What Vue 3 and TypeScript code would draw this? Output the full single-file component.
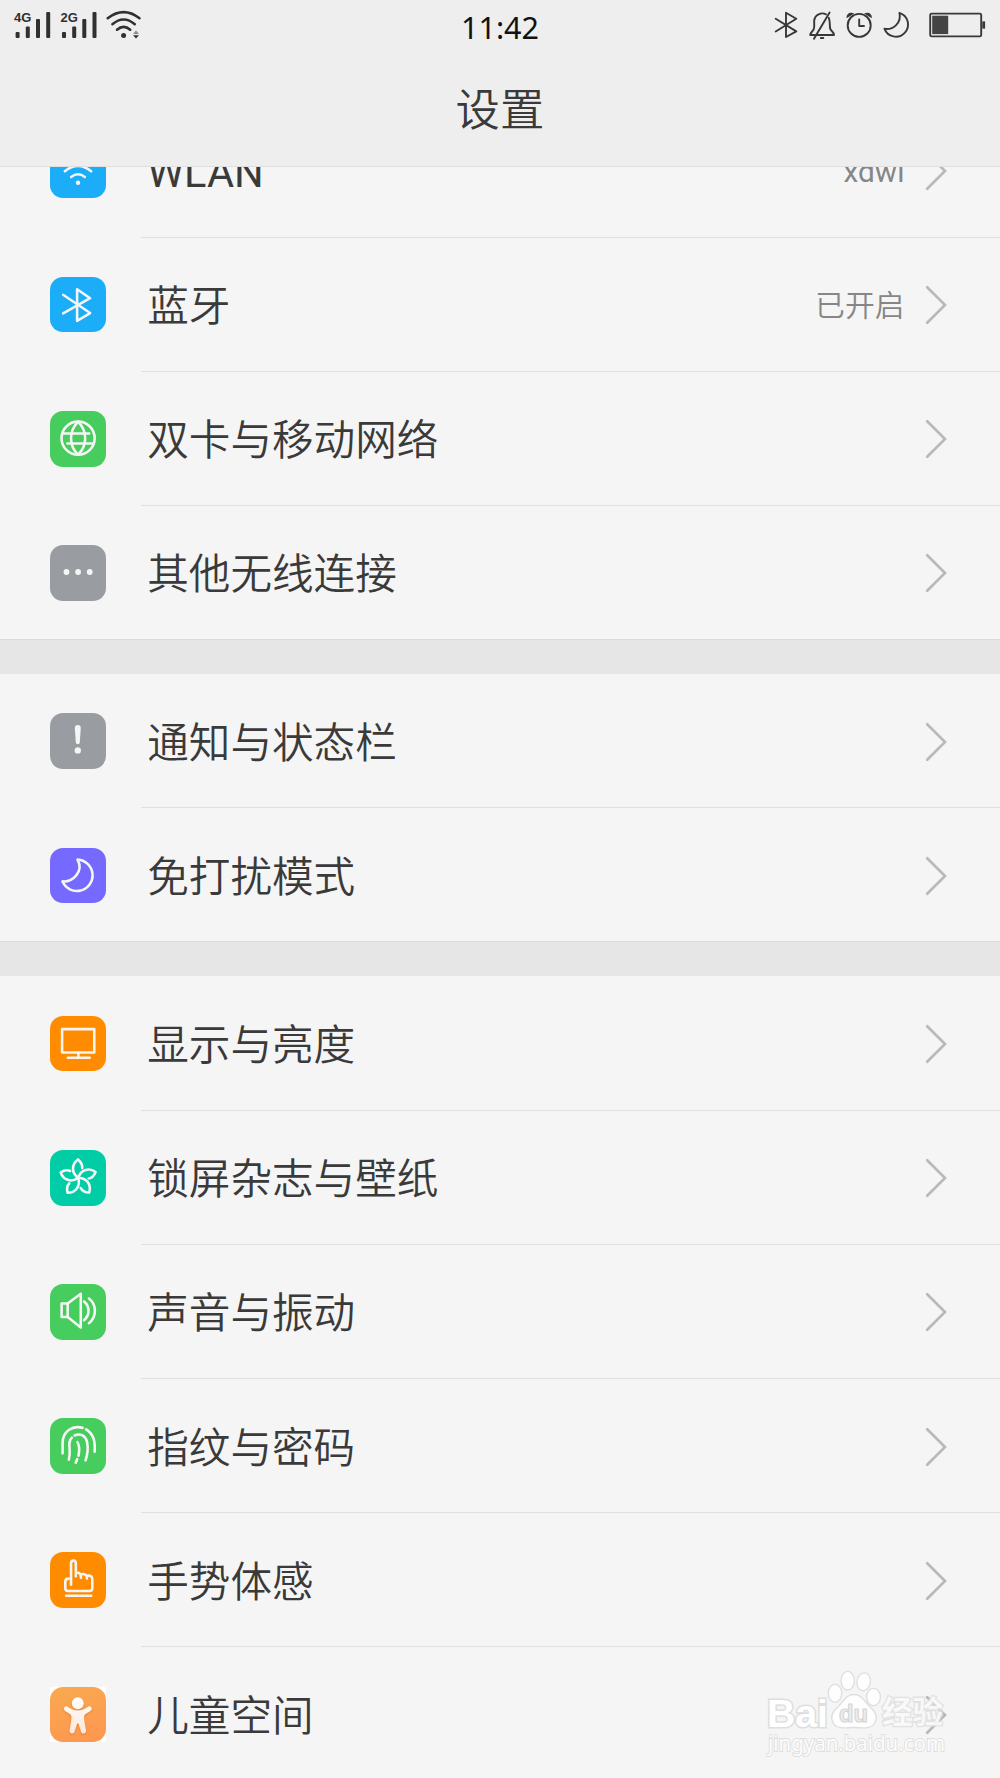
<script setup lang="ts">
type IconName =
  | 'wifi' | 'bluetooth' | 'globe' | 'dots' | 'alert' | 'moon' | 'display'
  | 'flower' | 'sound' | 'finger' | 'hand' | 'child'

interface Item {
  icon: IconName
  label: string
  color: string
  value?: string
  latin?: boolean
}

const sections: Item[][] = [
  [
    { icon: 'wifi', label: 'WLAN', color: 'blue', value: 'xdwl', latin: true },
    { icon: 'bluetooth', label: '蓝牙', color: 'blue', value: '已开启' },
    { icon: 'globe', label: '双卡与移动网络', color: 'green' },
    { icon: 'dots', label: '其他无线连接', color: 'gray' },
  ],
  [
    { icon: 'alert', label: '通知与状态栏', color: 'gray' },
    { icon: 'moon', label: '免打扰模式', color: 'purple' },
  ],
  [
    { icon: 'display', label: '显示与亮度', color: 'orange' },
    { icon: 'flower', label: '锁屏杂志与壁纸', color: 'teal' },
    { icon: 'sound', label: '声音与振动', color: 'green' },
    { icon: 'finger', label: '指纹与密码', color: 'green' },
    { icon: 'hand', label: '手势体感', color: 'orange' },
    { icon: 'child', label: '儿童空间', color: 'peach' },
  ],
]

const strokes: Partial<Record<IconName, string[]>> = {
  wifi: ['M15 28.4Q28.2 17.6 41.4 28.4', 'M21.3 34.3Q28.2 28.6 35.1 34.3'],
  bluetooth: ['M13.2 17.9L40.4 36.3L27.3 44.2V12.4L40.4 21.4L13.2 36.6'],
  globe: [
    'M28.3 10.7a16.7 16.7 0 1 0 0 33.4a16.7 16.7 0 1 0 0-33.4',
    'M28.3 10.9C18.8 20 18.8 35 28.3 44C37.8 35 37.8 20 28.3 10.9',
    'M13.3 22.7H39.5',
    'M17.5 32.8H43.5',
  ],
  moon: ['M27.7 11.7A15.8 15.8 0 1 1 12.5 33.6C22.6 34.6 34.5 23.8 27.7 11.7Z'],
  display: ['M12.2 13.2H44.6V36.8H12.2Z', 'M28.6 37V42', 'M18 42H40'],
  sound: [
    'M11.7 19.7H17.8V33.2H11.7Z',
    'M17.8 19.7L31 9.8V43.8L17.8 33.2',
    'M34.3 17.6Q38.8 21.2 38.8 27Q38.8 32.8 34.3 36.4',
    'M39.2 14.6Q45.2 19 45.2 27Q45.2 35 39.2 39.5',
  ],
  finger: [
    'M12.7 35.6V25.2C12.7 13.5 22.5 7 32.8 9.9',
    'M36.4 11.5C44.2 16.5 45.6 23.5 45 34',
    'M22 19.8C16.5 25.5 22 31 19 42',
    'M24.8 17.6C30.5 14.8 36 18 37.4 24.3C38.5 30.5 38 36.5 35.8 42.7',
    'M27.6 24.3C30 28 29.7 33 28.7 38',
    'M27.4 41.4L25.9 45',
  ],
  hand: [
    'M21.2 33V11.5C21.2 7.8 26 7.8 26 11.5V24.5M26 21.2C29.8 20.2 31.2 22 31.2 26M31.2 22.6C35 21.3 37.2 23 37.2 26.7M37.2 24C41 23.2 42.6 24.7 42.6 27.5V36.5Q42.6 39.2 40 39.2H18Q15.4 39.2 15.4 36.5V30Q15.4 26.8 18.8 26.8',
    'M16.2 44H41.5',
  ],
}

const petals = [0, 72, 144, 216, 288]
</script>

<template>
  <div class="screen">
    <header class="header">
      <div class="status">
        <svg class="status-left" viewBox="0 0 160 50">
          <g fill="#303030">
            <text x="14" y="22" class="net">4G</text>
            <rect x="15.6" y="32" width="4" height="6" rx="1" />
            <rect x="25.8" y="26.5" width="4" height="11.5" rx="1" />
            <rect x="36" y="19" width="4" height="19" rx="1" />
            <rect x="46.2" y="12" width="4" height="26" rx="1" />
            <text x="60.5" y="22" class="net">2G</text>
            <rect x="62" y="32" width="4" height="6" rx="1" />
            <rect x="72.2" y="26.5" width="4" height="11.5" rx="1" />
            <rect x="82.3" y="19" width="4" height="19" rx="1" />
            <rect x="92.5" y="12" width="4" height="26" rx="1" />
            <circle cx="123.6" cy="35.5" r="2.5" />
            <path d="M133 34L136 30.5L139 34Z" fill="#8a8a8a" />
            <path d="M133 35.3L136 38.6L139 35.3Z" />
          </g>
          <g fill="none" stroke="#303030" stroke-width="2.5" stroke-linecap="round">
            <path d="M107.7 18.3Q123.6 6 139.5 18.3" />
            <path d="M112.4 24.3Q123.6 14.6 134.8 24.3" />
            <path d="M117 29.8Q123.6 24 130.2 29.8" />
          </g>
        </svg>
        <span class="time">11:42</span>
        <svg class="status-right" viewBox="0 0 240 50">
          <g fill="none" stroke="#383838" stroke-width="1.9" stroke-linejoin="round" stroke-linecap="round">
            <path d="M15.7 18.7L36.3 31.4L26 37V12.8L36.3 18.7L15.7 31.5" />
            <path d="M66 14.3C61.5 12 54.6 14.5 54.2 21V27C54.2 31.5 50.2 31.8 50.2 35H54.6M68.8 17.8C70.2 21 69.6 24 70 28C70.4 31 74 31.8 74 35H57.6M69.6 12.5L54 38.8M60.8 38H63.3" />
            <circle cx="99.2" cy="25.4" r="11.5" />
            <path d="M99.2 19.5V26H104" />
            <path d="M139.4 12.8A12.2 12.2 0 1 1 124.4 28.7C132.5 30.3 142 23.5 139.4 12.8Z" />
            <rect x="170.2" y="13.6" width="51" height="22.8" rx="1.5" />
          </g>
          <path d="M86.6 18.3C86.2 13.5 90 11.8 94.3 13.4ZM111.8 18.3C112.2 13.5 108.4 11.8 104.1 13.4Z" fill="#383838" />
          <rect x="172.2" y="15.7" width="16" height="18.4" fill="#444" />
          <rect x="222.3" y="21.4" width="2.8" height="7.2" fill="#383838" />
        </svg>
      </div>
      <h1 class="title">设置</h1>
    </header>

    <main class="list">
      <section v-for="(items, s) in sections" :key="s" class="section">
        <div v-for="item in items" :key="item.label" class="row" :class="{ latin: item.latin }">
          <div class="badge-box" :class="{ bare: item.color === 'peach' }">
            <svg class="badge" :class="item.color" viewBox="0 0 56 56">
              <g class="line">
                <path v-for="d in strokes[item.icon] ?? []" :key="d" :d="d" />
                <template v-if="item.icon === 'flower'">
                  <path
                    v-for="a in petals"
                    :key="a"
                    d="M28.8 28C20.8 23 22 14 28.2 9.5C31.2 12 32.8 15 32.4 18.2"
                    :transform="`rotate(${a} 28.4 28)`"
                  />
                </template>
              </g>
              <circle v-if="item.icon === 'wifi'" cx="28.2" cy="40" r="2.2" fill="#f5f5f5" />
              <g v-if="item.icon === 'dots'" fill="#f5f5f5">
                <circle cx="16.6" cy="27.2" r="2.9" />
                <circle cx="28.3" cy="27.2" r="2.9" />
                <circle cx="40" cy="27.2" r="2.9" />
              </g>
              <g v-if="item.icon === 'alert'" fill="#f5f5f5">
                <path d="M25 15Q25 12 28 12Q31 12 31 15L30 29.5Q29.8 31.5 28 31.5Q26.2 31.5 26 29.5Z" />
                <circle cx="28" cy="37.7" r="3.2" />
              </g>
              <g v-if="item.icon === 'child'">
                <defs>
                  <linearGradient id="kid" x1="0" y1="10" x2="0" y2="48" gradientUnits="userSpaceOnUse">
                    <stop offset="0" stop-color="#fff" />
                    <stop offset="1" stop-color="#fee6d6" />
                  </linearGradient>
                </defs>
                <g class="kid">
                  <circle cx="28" cy="16.4" r="6" fill="url(#kid)" />
                  <path
                    d="M17.3 19.6C21 22 24 23.7 28 23.7C32 23.7 35 22 38.7 19.6C41.3 18.5 43.2 22 41 23.8C38.5 25.8 34.3 27 34.3 29.8C34.3 34 35.5 39 36.3 43.8C36.6 47.5 32.2 47.8 31.3 45L28.9 37.5Q28 35.6 27.1 37.5L24.7 45C23.8 47.8 19.4 47.5 19.7 43.8C20.5 39 21.7 34 21.7 29.8C21.7 27 17.5 25.8 15 23.8C12.8 22 14.7 18.5 17.3 19.6Z"
                    fill="url(#kid)"
                  />
                </g>
              </g>
            </svg>
          </div>
          <div class="content">
            <span class="label">{{ item.label }}</span>
            <span v-if="item.value" class="value">{{ item.value }}</span>
            <svg class="chevron" viewBox="0 0 22 40">
              <path d="M2.2 2.2L20 20L2.2 37.8" />
            </svg>
          </div>
        </div>
      </section>
    </main>

    <svg class="watermark" viewBox="0 0 260 138">
      <g fill="#fff" fill-opacity="0.85" stroke="#dedede" stroke-width="1.3">
        <text x="27" y="86.5" class="wm-brand" textLength="61" lengthAdjust="spacingAndGlyphs">Bai</text>
        <ellipse cx="95" cy="53.3" rx="6.7" ry="9" />
        <ellipse cx="107.7" cy="40.7" rx="6.7" ry="9.3" />
        <ellipse cx="123.7" cy="41.8" rx="6.7" ry="9" transform="rotate(10 123.7 41.8)" />
        <ellipse cx="133.5" cy="57" rx="6.9" ry="8.7" />
        <path d="M114 54.5C122 54.5 124 61 130 67C136 72 138 78 134.5 83.5C130 90 121 87.5 114 87.5C107 87.5 98 90 93.5 83.5C90 78 92 72 98 67C104 61 106 54.5 114 54.5Z" />
        <text x="142" y="83" class="wm-cn" textLength="61" lengthAdjust="spacingAndGlyphs">经验</text>
      </g>
      <text x="99" y="82" class="wm-du" textLength="29" lengthAdjust="spacingAndGlyphs">du</text>
      <text x="28" y="110.5" class="wm-url" textLength="177" lengthAdjust="spacingAndGlyphs">jingyan.baidu.com</text>
    </svg>
  </div>
</template>

<style>
body {
  background: #f5f5f5;
}
</style>

<style scoped>
.screen {
  position: relative;
  width: 1000px;
  height: 1778px;
  overflow: hidden;
  background: #f5f5f5;
  color: #3a3a3a;
  font-family: Roboto, "Noto Sans CJK SC", sans-serif;
  font-weight: 350;
  display: flex;
  flex-direction: column;
}
.header {
  flex: none;
  height: 166px;
  background: #eee;
  border-bottom: 1px solid #dfdfdf;
}
.status {
  height: 50px;
  display: grid;
  grid-template-columns: 1fr auto 1fr;
  grid-template-rows: 50px;
  align-items: center;
}
.status-left {
  width: 160px;
  height: 50px;
}
.status-right {
  width: 240px;
  height: 50px;
  justify-self: end;
}
.net {
  font: bold 13px "Liberation Sans", sans-serif;
}
.time {
  font: 30.5px/50px "Noto Sans", sans-serif;
  color: #111;
  padding-top: 3px;
}
.title {
  margin: 29px 0 0;
  font-size: 44.4px;
  line-height: 64px;
  font-weight: 350;
  text-align: center;
}
.list {
  flex: 1;
  min-height: 0;
  overflow: hidden;
}
.section {
  border-bottom: 34px solid #e6e6e6;
  box-shadow: inset 0 -1px #dadada;
}
.section:first-child {
  margin-top: -63.7px;
}
.section:last-child {
  border-bottom: 0;
}
.row {
  height: 134.2px;
  display: flex;
  align-items: center;
  padding-left: 50px;
}
.latin {
  font-weight: 400;
}
.badge-box {
  flex: none;
  width: 55.6px;
  height: 55.6px;
}
.badge-box.bare {
  background: #fff;
}
.badge {
  display: block;
  width: 100%;
  height: 100%;
  border-radius: 13px;
}
.blue { background: #1badf8; }
.green { background: #46cd5d; }
.gray { background: #999da2; }
.purple { background: #7569ff; }
.orange { background: #ff8c00; }
.teal { background: #00cda5; }
.peach { background: linear-gradient(165deg, #f9aa50, #fe964f); }
.line {
  fill: none;
  stroke: #f5f5f5;
  stroke-width: 2.6;
  stroke-linecap: round;
  stroke-linejoin: round;
}
.kid {
  filter: drop-shadow(0 1px 1px rgba(190, 90, 20, 0.4));
}
.content {
  flex: 1;
  align-self: stretch;
  margin-left: 35.6px;
  padding: 0 53px 0 6px;
  display: flex;
  align-items: center;
  box-shadow: inset 0 -1px #e0e0e0;
}
.row:last-child .content {
  box-shadow: none;
}
.label {
  flex: 1;
  padding-top: 5px;
  font-size: 41.6px;
  line-height: 60px;
}
.value {
  padding-top: 3px;
  font-size: 29.8px;
  line-height: 44px;
  color: #868686;
  margin-right: 20.5px;
}
.chevron {
  width: 22px;
  height: 40px;
  margin-top: 1px;
  fill: none;
  stroke: #b9b9b9;
  stroke-width: 2.7;
  stroke-linecap: round;
}
.watermark {
  position: absolute;
  left: 740px;
  top: 1640px;
  width: 260px;
  height: 138px;
}
.wm-brand {
  font: bold 38px "Liberation Sans", sans-serif;
  fill-opacity: 1;
  stroke-width: 3px;
  paint-order: stroke;
}
.wm-cn {
  font: bold 31px "Noto Sans CJK SC", sans-serif;
  fill-opacity: 0.75;
  stroke-opacity: 0.85;
  stroke-width: 2.6px;
  paint-order: stroke;
}
.wm-du {
  font: bold 24px "Liberation Sans", sans-serif;
  fill: #ededed;
  stroke: #d6d6d6;
  stroke-width: 1.2px;
}
.wm-url {
  font: 21px "Noto Sans", sans-serif;
  fill: #fcfcfc;
  stroke: #dedede;
  stroke-width: 1.8px;
  paint-order: stroke;
}
</style>
